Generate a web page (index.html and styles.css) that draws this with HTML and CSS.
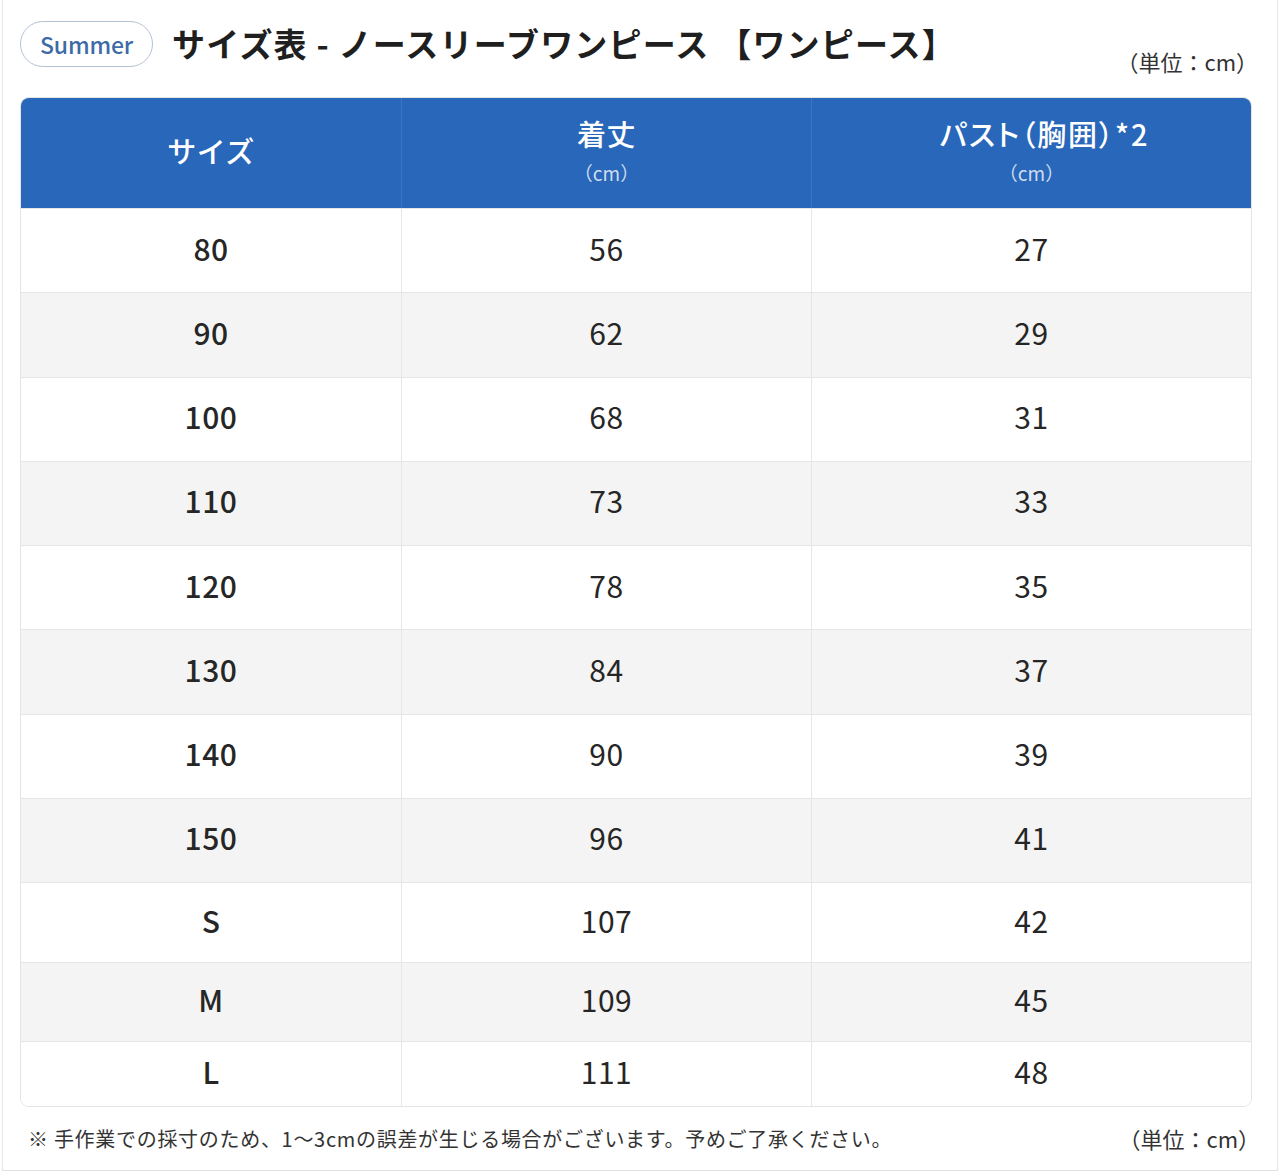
FILE: index.html
```html
<!DOCTYPE html>
<html lang="ja">
<head>
<meta charset="utf-8">
<title>サイズ表 - ノースリーブワンピース</title>
<link rel="stylesheet" href="styles.css">
</head>
<body>
<div class="frame">
  <header class="top">
    <span class="badge">Summer</span>
    <h1 class="title">サイズ表 - ノースリーブワンピース 【ワンピース】</h1>
    <span class="unit unit-top">（単位：cm）</span>
  </header>

  <div class="table">
    <div class="row head">
      <div class="cell"><span class="h-main">サイズ</span></div>
      <div class="cell"><span class="h-main">着丈</span><span class="h-sub">（cm）</span></div>
      <div class="cell"><span class="h-main h-prop">パスト（胸囲）*2</span><span class="h-sub">（cm）</span></div>
    </div>
    <div class="row r84"><div class="cell">80</div><div class="cell">56</div><div class="cell">27</div></div>
    <div class="row r84 alt"><div class="cell">90</div><div class="cell">62</div><div class="cell">29</div></div>
    <div class="row r84"><div class="cell">100</div><div class="cell">68</div><div class="cell">31</div></div>
    <div class="row r84 alt"><div class="cell">110</div><div class="cell">73</div><div class="cell">33</div></div>
    <div class="row r84"><div class="cell">120</div><div class="cell">78</div><div class="cell">35</div></div>
    <div class="row r84 alt"><div class="cell">130</div><div class="cell">84</div><div class="cell">37</div></div>
    <div class="row r84"><div class="cell">140</div><div class="cell">90</div><div class="cell">39</div></div>
    <div class="row r84 alt"><div class="cell">150</div><div class="cell">96</div><div class="cell">41</div></div>
    <div class="row rs"><div class="cell">S</div><div class="cell">107</div><div class="cell">42</div></div>
    <div class="row rm alt"><div class="cell">M</div><div class="cell">109</div><div class="cell">45</div></div>
    <div class="row rl"><div class="cell">L</div><div class="cell">111</div><div class="cell">48</div></div>
  </div>

  <footer class="foot">
    <p class="note">※ 手作業での採寸のため、1〜3cmの誤差が生じる場合がございます。予めご了承ください。</p>
    <span class="unit unit-bottom">（単位：cm）</span>
  </footer>
</div>
</body>
</html>
```

FILE: styles.css
```css
* { box-sizing: border-box; }

html, body {
  margin: 0;
  padding: 0;
  background: #ffffff;
}

body {
  font-family: "Noto Sans CJK JP", "Noto Sans", sans-serif;
  color: #222222;
}

.frame {
  width: 1276px;
  height: 1171px;
  margin-left: 2px;
  border-left: 1px solid #e6e6e6;
  border-right: 1px solid #e6e6e6;
  border-bottom: 1px solid #e0e0e0;
  padding: 21px 23px 0 17px;
}

.top {
  display: flex;
  align-items: flex-start;
  height: 76px;
}

.badge {
  display: inline-flex;
  align-items: center;
  justify-content: center;
  flex: none;
  width: 133px;
  height: 46px;
  border: 1.5px solid #b4c3d4;
  border-radius: 23px;
  color: #3d6ba6;
  font-size: 23px;
  font-weight: 500;
  letter-spacing: -0.2px;
}

.title {
  margin: 0 0 0 19px;
  font-size: 33px;
  font-weight: 700;
  line-height: 44px;
  color: #1f1f1f;
  letter-spacing: 1.2px;
  flex: 1;
  white-space: nowrap;
}

.unit {
  color: #333333;
  white-space: nowrap;
}

.unit-top {
  font-size: 22px;
  margin-top: 24px;
  margin-right: -4px;
}

.table {
  width: 1232px;
  border: 1px solid #e4e4e4;
  border-radius: 9px;
  overflow: hidden;
}

.row {
  display: grid;
  grid-template-columns: 380px 410px 1fr;
  border-top: 1px solid #e6e6e6;
  background: #ffffff;
}

.row.alt { background: #f4f4f4; }

.row .cell {
  display: flex;
  flex-direction: column;
  align-items: center;
  justify-content: center;
  padding-bottom: 6px;
  font-size: 30px;
  font-weight: 400;
  letter-spacing: 0.5px;
  color: #262626;
  border-left: 1px solid #e6e6e6;
}

.row .cell:first-child {
  border-left: none;
  font-weight: 500;
}

.r84 { height: 84.25px; }
.rs { height: 80px; }
.rm { height: 79px; }
.rl { height: 65px; }

.row.head {
  height: 110px;
  background: #2867b9;
  border-top: none;
}

.row.head .cell {
  color: #ffffff;
  border-left: 1px solid #3a76c2;
  padding-bottom: 6px;
}

.row.head .cell:first-child { border-left: none; }

.h-main {
  font-size: 29px;
  font-weight: 500;
  line-height: 38px;
  color: #ffffff;
}

.h-prop {
  font-feature-settings: "palt";
  letter-spacing: 1.8px;
  margin-left: 26px;
}

.h-sub {
  font-size: 19px;
  font-weight: 400;
  line-height: 26px;
  margin-top: 8px;
  color: #cfdcf0;
  letter-spacing: 0;
}

.foot {
  display: flex;
  align-items: center;
  justify-content: space-between;
  height: 66px;
  padding: 0 0 4px 8px;
}

.note {
  margin: 0;
  font-size: 20px;
  letter-spacing: 0.7px;
  color: #333333;
  white-space: nowrap;
}

.unit-bottom {
  font-size: 22px;
  margin-right: -6px;
}
```
